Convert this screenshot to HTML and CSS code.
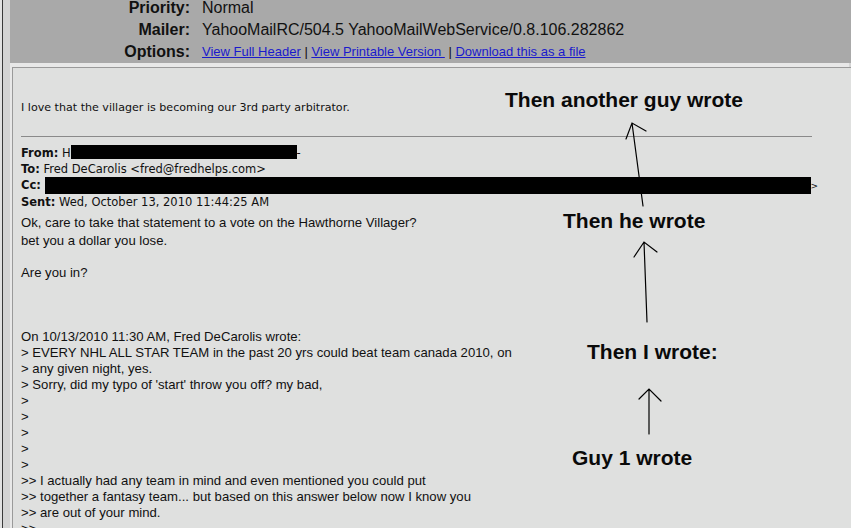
FILE: index.html
```html
<!DOCTYPE html>
<html>
<head>
<meta charset="utf-8">
<link rel="stylesheet" href="styles.css">
</head>
<body>
<div class="page">
  <div class="frame">
    <div class="hdr">
      <div class="rows">
        <span class="lbl">Priority:</span><span class="val">Normal</span>
        <span class="lbl">Mailer:</span><span class="val">YahooMailRC/504.5 YahooMailWebService/0.8.106.282862</span>
        <span class="lbl">Options:</span><span class="val links"><a href="#">View Full Header</a> | <a href="#">View Printable Version&nbsp;</a> | <a href="#">Download this as a file</a></span>
      </div>
    </div>
    <div class="box">
      <p class="intro">I love that the villager is becoming our 3rd party arbitrator.</p>
      <div class="rule"></div>
      <div class="meta">
        <div><b>From:</b> H<span class="redact r-from"></span>-</div>
        <div><b>To:</b> Fred DeCarolis &lt;fred@fredhelps.com&gt;</div>
        <div><b>Cc:</b> <span class="redact r-cc"></span><span class="tail">&gt;</span></div>
        <div><b>Sent:</b> Wed, October 13, 2010 11:44:25 AM</div>
      </div>
      <div class="msg">
        <div class="first">Ok, care to take that statement to a vote on the Hawthorne Villager?</div>
        <div class="second">bet you a dollar you lose.</div>
        <div class="blank"></div>
        <div>Are you in?</div>
        <div class="blank"></div>
        <div class="blank"></div>
        <div class="blank"></div>
        <div>On 10/13/2010 11:30 AM, Fred DeCarolis wrote:</div>
        <div>&gt; EVERY NHL ALL STAR TEAM in the past 20 yrs could beat team canada 2010, on</div>
        <div>&gt; any given night, yes.</div>
        <div>&gt; Sorry, did my typo of 'start' throw you off? my bad,</div>
        <div>&gt;</div>
        <div>&gt;</div>
        <div>&gt;</div>
        <div>&gt;</div>
        <div>&gt;</div>
        <div>&gt;&gt; I actually had any team in mind and even mentioned you could put</div>
        <div>&gt;&gt; together a fantasy team... but based on this answer below now I know you</div>
        <div>&gt;&gt; are out of your mind.</div>
        <div>&gt;&gt;</div>
      </div>
    </div>
  </div>
  <div class="notes">
    <svg class="arrows" width="851" height="528" viewBox="0 0 851 528">
      <g stroke="#000" stroke-width="1.2" fill="none" stroke-linecap="round">
        <path d="M643 206 L632 123 M626 139 L632 123 L646 131"/>
        <path d="M647 322 L644 242 M634 257 L644 242 L657 252"/>
        <path d="M649 434 L649 389 M639 399 L649 389 L661 401"/>
      </g>
    </svg>
    <span class="note n1">Then another guy wrote</span>
    <span class="note n2">Then he wrote</span>
    <span class="note n3">Then I wrote:</span>
    <span class="note n4">Guy 1 wrote</span>
  </div>
</div>
</body>
</html>
```
FILE: styles.css
```css
html, body {
  margin: 0;
  padding: 0;
  background: #e2e2e2;
  overflow: hidden;
}
.page {
  position: relative;
  width: 851px;
  height: 528px;
  overflow: hidden;
}
.frame {
  display: flex;
  flex-direction: column;
  margin-left: 2px;
  border-left: 1px solid #3a3a3a;
  padding-left: 7px;
  background: #d4d4d4;
  height: 528px;
}
.hdr {
  flex: none;
  background: #a9a9a9;
  height: 63px;
  overflow: hidden;
  font-family: "Liberation Sans", Arial, sans-serif;
  font-size: 16px;
  color: #111;
}
.rows {
  display: grid;
  grid-template-columns: 180px 1fr;
  column-gap: 12px;
  margin-top: -3px;
}
.lbl {
  font-weight: bold;
  text-align: right;
  line-height: 22px;
}
.val {
  line-height: 22px;
  white-space: nowrap;
}
.links {
  font-size: 13px;
}
.links a {
  color: #1a1acc;
  text-decoration: underline;
}
.box {
  flex: 1;
  margin-left: 2px;
  margin-top: 4px;
  border-left: 1px solid #9a9a9a;
  border-top: 1px solid #9a9a9a;
  background: #dfe0df;
  padding: 32px 0 0 8px;
  color: #111;
  box-shadow: -2px -4px 0 #e8e8e8;
}
.intro {
  margin: 0;
  font-family: "DejaVu Sans", Tahoma, sans-serif;
  font-size: 11.1px;
  line-height: 16px;
}
.rule {
  margin-top: 20px;
  width: 791px;
  border-top: 1px solid #8a8a8a;
}
.meta {
  margin-top: 8px;
  font-family: "DejaVu Sans", Tahoma, sans-serif;
  font-size: 11.5px;
  line-height: 16px;
  white-space: nowrap;
}
.redact {
  display: inline-block;
  background: #000;
  vertical-align: top;
}
.r-from {
  width: 226px;
  height: 14px;
  margin-top: 0px;
}
.r-cc {
  width: 766px;
  height: 17px;
}
.tail {
  font-size: 9px;
}
.msg {
  margin-top: 5px;
  font-family: "Liberation Sans", Arial, sans-serif;
  font-size: 13.15px;
  line-height: 16px;
  white-space: nowrap;
}
.msg .second { margin-top: 2px; }
.blank { height: 16px; }
.notes {
  position: absolute;
  inset: 0;
  pointer-events: none;
}
.arrows {
  position: absolute;
  left: 0;
  top: 0;
}
.note {
  position: absolute;
  font-family: "Liberation Sans", Arial, sans-serif;
  font-weight: bold;
  font-size: 21px;
  line-height: 24px;
  color: #0a0a0a;
  white-space: nowrap;
}
.n1 { left: 505px; top: 88px; }
.n2 { left: 563px; top: 209px; }
.n3 { left: 587px; top: 340px; }
.n4 { left: 572px; top: 446px; }
```
